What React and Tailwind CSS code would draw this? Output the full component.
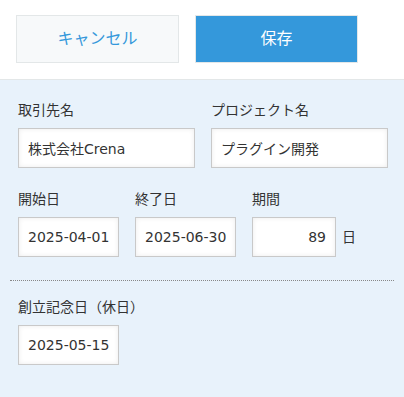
const inputCls =
  "h-[40px] border border-[#c9c9c9] bg-white px-[9px] text-[14px] text-[#333] shadow-[inset_0_0_5px_#ececec] outline-none";

function Field({ label, value, width, right }) {
  return (
    <div className="flex flex-col">
      <label className="mb-[8px] text-[14px] leading-[20px] text-[#333]">{label}</label>
      <input
        readOnly
        value={value}
        className={`${inputCls} ${width} ${right ? "text-right" : ""}`}
      />
    </div>
  );
}

export default function App() {
  return (
    <div
      className="h-[397px] w-[404px] bg-[#e8f2fb]"
      style={{ fontFamily: '"DejaVu Sans", "Noto Sans CJK JP", sans-serif' }}
    >
      {/* header buttons */}
      <div className="flex h-[80px] gap-4 border-b border-[#e3e7e8] bg-white pl-[16px] pt-[15px]">
        <button className="h-[48px] w-[163px] border border-[#e3e7e8] bg-[#f7f9fa] text-[16px] text-[#3498db]">
          キャンセル
        </button>
        <button className="h-[48px] w-[163px] border border-[#e3e7e8] bg-[#3498db] text-[16px] text-white">
          保存
        </button>
      </div>

      <div className="px-[18px] pt-[20px]">
        <div className="flex gap-4">
          <Field label="取引先名" value="株式会社Crena" width="w-[177px]" />
          <Field label="プロジェクト名" value="プラグイン開発" width="w-[177px]" />
        </div>

        <div className="mt-[21px] flex gap-4">
          <Field label="開始日" value="2025-04-01" width="w-[101px]" />
          <Field label="終了日" value="2025-06-30" width="w-[101px]" />
          <div className="flex items-end">
            <Field label="期間" value="89" width="w-[84px]" right />
            <span className="mb-[10px] ml-[6px] text-[14px] leading-[20px] text-[#333]">日</span>
          </div>
        </div>

        <div className="-mx-[8px] mt-[23px] border-t border-dotted border-[#888]" />

        <div className="mt-[16px]">
          <Field label="創立記念日（休日）" value="2025-05-15" width="w-[101px]" />
        </div>
      </div>
    </div>
  );
}
